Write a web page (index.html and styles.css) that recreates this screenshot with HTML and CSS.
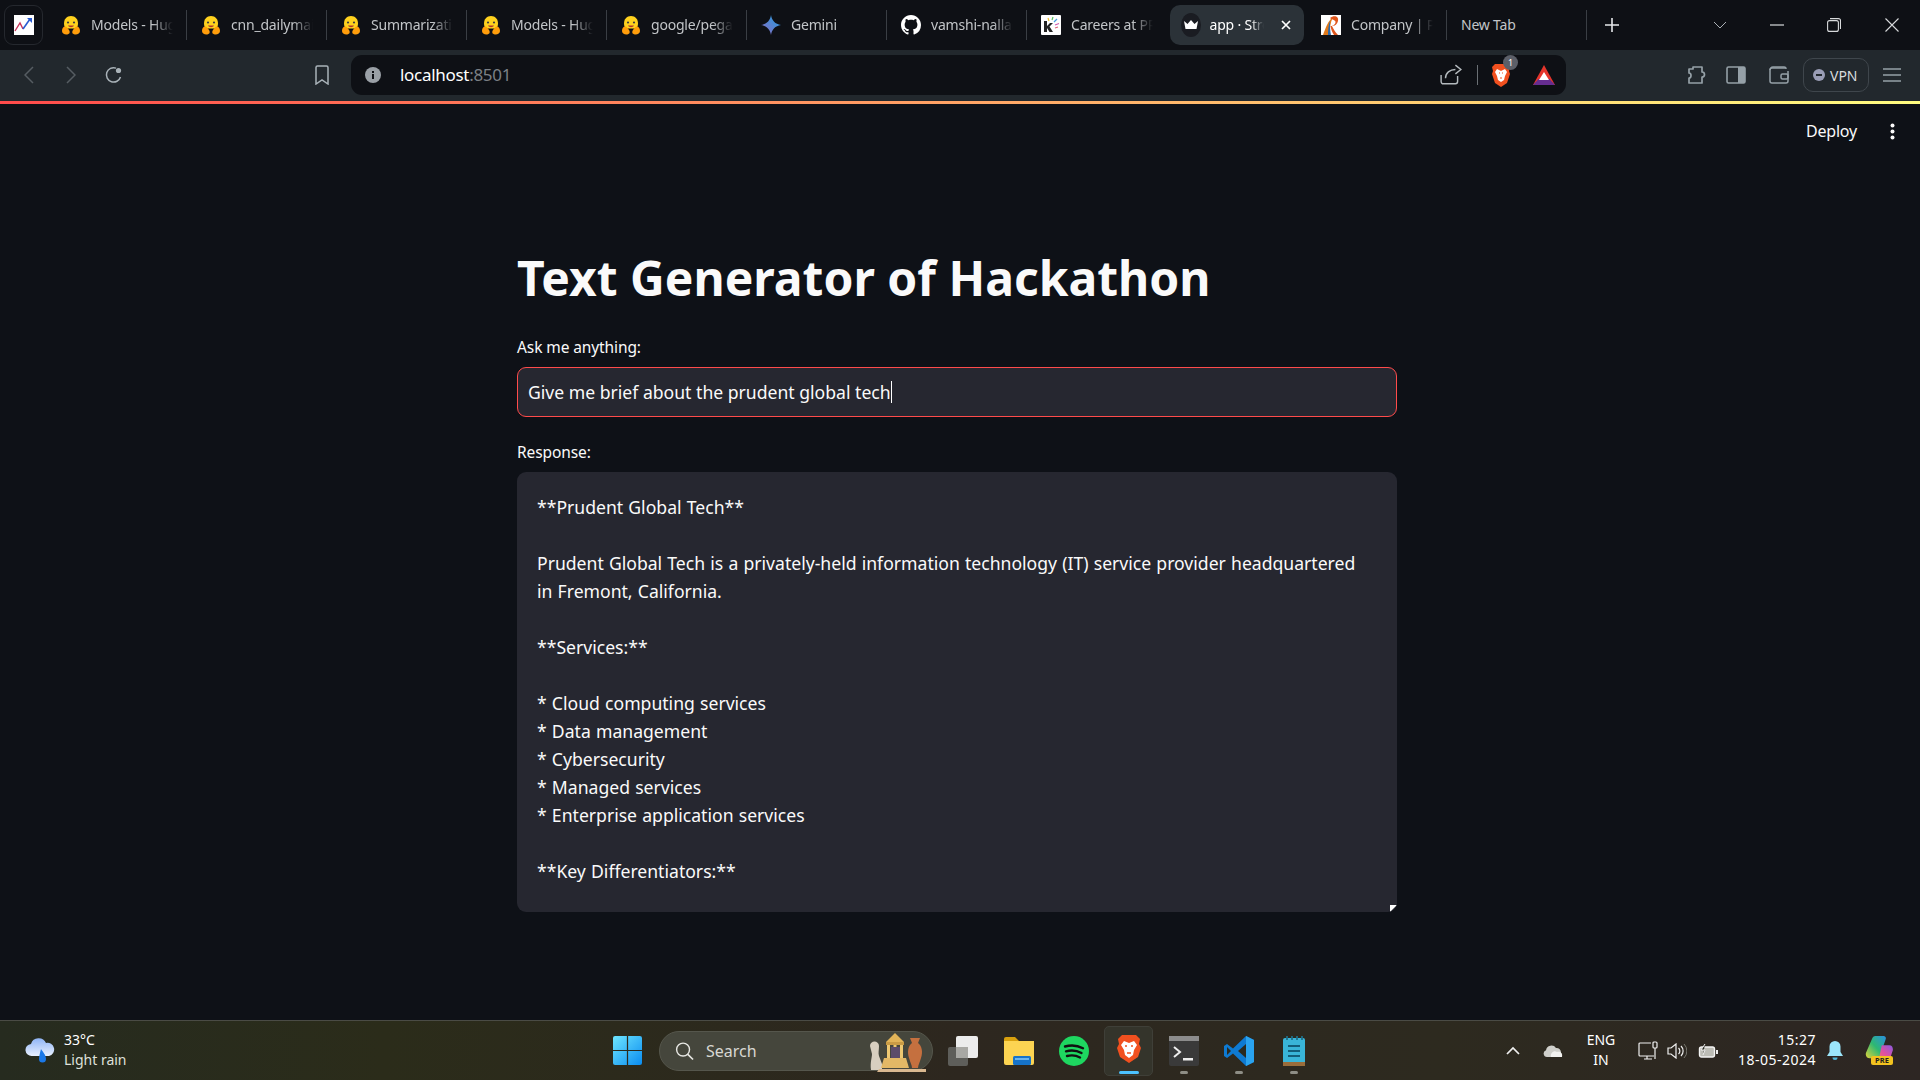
FILE: index.html
```html
<!DOCTYPE html>
<html lang="en">
<head>
<meta charset="utf-8">
<title>app · Streamlit</title>
<link rel="stylesheet" href="styles.css">
</head>
<body>
<svg class="sprite" xmlns="http://www.w3.org/2000/svg">
  <symbol id="hf" viewBox="0 0 20 20">
    <path d="M10 1C5.600 1 3 4.400 3 8.500c0 2 .6 3.700 1.600 5l10.800 0c1-1.300 1.600-3 1.600-5C17 4.400 14.400 1 10 1z" fill="#FFD21E"/>
    <circle cx="7" cy="7.500" r="1.100" fill="#3a3b45"/><circle cx="13" cy="7.500" r="1.100" fill="#3a3b45"/>
    <path d="M7 10.500c1 2.300 5 2.300 6 0z" fill="#b3322f"/>
    <path d="M1 16c0-3 1.500-4.500 3-4.500 1.500 0 2.500 1.500 4 3.500.8 1.100 1.500 3.500-1 4.200C4 20 1 18.500 1 16z" fill="#FF9D0B"/>
    <path d="M19 16c0-3-1.500-4.500-3-4.500-1.500 0-2.500 1.500-4 3.500-.8 1.100-1.500 3.500 1 4.200 3 .8 6-.7 6-3.200z" fill="#FF9D0B"/>
  </symbol>
</svg>

<header class="tabstrip">
  <div class="app-tile">
    <svg class="fav" viewBox="0 0 20 20"><rect width="20" height="20" fill="#fff"/><path d="M1 16l5-8 3 6" fill="none" stroke="#c9345a" stroke-width="1.400"/><path d="M9 14l7-10" fill="none" stroke="#2a5bd0" stroke-width="1.600"/><path d="M13 3h5v5z" fill="#2a5bd0"/></svg>
  </div>
  <div class="tab sep"><svg class="fav"><use href="#hf"/></svg><span class="tab-title">Models - Hugging Face</span></div>
  <div class="tab sep"><svg class="fav"><use href="#hf"/></svg><span class="tab-title">cnn_dailymail · Datasets</span></div>
  <div class="tab sep"><svg class="fav"><use href="#hf"/></svg><span class="tab-title">Summarization - Hugging</span></div>
  <div class="tab sep"><svg class="fav"><use href="#hf"/></svg><span class="tab-title">Models - Hugging Face</span></div>
  <div class="tab sep"><svg class="fav"><use href="#hf"/></svg><span class="tab-title">google/pegasus-xsum</span></div>
  <div class="tab sep">
    <svg class="fav" viewBox="0 0 20 20"><defs><linearGradient id="gem" x1="0" y1="1" x2="1" y2="0"><stop offset="0" stop-color="#9168c0"/><stop offset=".5" stop-color="#5684d1"/><stop offset="1" stop-color="#1ba1e3"/></linearGradient></defs><path d="M10 0c.8 5.500 4.200 9.200 10 10-5.800.8-9.200 4.500-10 10-.8-5.500-4.200-9.200-10-10 5.800-.8 9.200-4.500 10-10z" fill="url(#gem)"/></svg>
    <span class="tab-title">Gemini</span>
  </div>
  <div class="tab sep">
    <svg class="fav" viewBox="0 0 16 16"><path fill="#fff" d="M8 0C3.580 0 0 3.580 0 8c0 3.540 2.290 6.530 5.470 7.590.4.070.55-.17.55-.38 0-.19-.01-.82-.01-1.490-2.010.37-2.530-.49-2.690-.94-.09-.23-.48-.94-.82-1.130-.28-.15-.68-.52-.01-.53.63-.01 1.080.58 1.230.82.720 1.210 1.870.87 2.330.66.070-.52.280-.87.510-1.070-1.780-.2-3.640-.89-3.640-3.950 0-.87.310-1.590.820-2.150-.08-.2-.36-1.020.08-2.120 0 0 .67-.21 2.200.82.640-.18 1.320-.27 2-.27s1.360.09 2 .27c1.530-1.040 2.200-.82 2.200-.82.440 1.100.16 1.920.08 2.120.51.560.82 1.270.82 2.150 0 3.070-1.870 3.750-3.650 3.950.29.250.54.730.54 1.480 0 1.070-.01 1.930-.01 2.200 0 .21.150.46.550.38A8.010 8.010 0 0016 8c0-4.420-3.580-8-8-8z"/></svg>
    <span class="tab-title">vamshi-nallaguntla</span>
  </div>
  <div class="tab">
    <svg class="fav" viewBox="0 0 20 20"><rect width="20" height="20" rx="1" fill="#fff"/><path d="M3 6h3v5l3-3h3l-3.500 3.500L12 17H8.500L6 13v4H3z" fill="#222"/><path d="M8 6l-1-3" stroke="#f0c030" stroke-width="1.200"/><path d="M11 5l1-3" stroke="#5ac060" stroke-width="1.200"/><path d="M13 7l3-3" stroke="#4a9be0" stroke-width="1.200"/><path d="M14 10l4-1.500" stroke="#d05ab0" stroke-width="1.200"/><path d="M14 13l3-1" stroke="#e0607a" stroke-width="1.200"/></svg>
    <span class="tab-title">Careers at PRUDENT</span>
  </div>
  <div class="tab tab-active">
    <span class="crown-disc"><svg viewBox="0 0 14 10"><path d="M0 1l3.500 3L7 0l3.500 4L14 1l-1.500 8h-11z" fill="#fff"/></svg></span>
    <span class="tab-title">app · Streamlit</span>
    <svg class="tab-close" viewBox="0 0 10 10"><path d="M1 1l8 8M9 1l-8 8" stroke="#fff" stroke-width="1.700"/></svg>
  </div>
  <div class="tab sep">
    <svg class="fav" viewBox="0 0 20 20"><rect width="20" height="20" fill="#fff"/><path d="M2 20C5 12 7 6 12 2c-3 6-3 12-4 18z" fill="#e07a1c"/><path d="M9 3c4-3 9-2 8 3-.6 3-3 5-6 5 1.500 3 3 6 6 9h-4c-2-3-3-6-3.500-9 2.500 0 5-1.500 5-4 0-2-3-2-5.500-4z" fill="#e0561c"/><path d="M7 20c0-5 .5-10 2-14 0 5 0 10 1 14z" fill="#2a6cb0"/></svg>
    <span class="tab-title">Company | PRUDENT</span>
  </div>
  <div class="tab tab-plain sep"><span class="tab-title">New Tab</span></div>
  <svg class="strip-plus" viewBox="0 0 16 16"><path d="M8 1v14M1 8h14" stroke="#e6e8ea" stroke-width="1.600"/></svg>
  <svg class="strip-chev" viewBox="0 0 14 8"><path d="M1 1l6 6 6-6" fill="none" stroke="#aab0b5" stroke-width="1"/></svg>
  <svg class="win-btn win-min" viewBox="0 0 14 14"><path d="M0 7h14" stroke="#d8dadc" stroke-width="1.200"/></svg>
  <svg class="win-btn win-max" viewBox="0 0 14 14"><rect x=".6" y="2.600" width="10.800" height="10.800" rx="2" fill="none" stroke="#d8dadc" stroke-width="1.100"/><path d="M3 .6h8.500a2 2 0 012 2V11" fill="none" stroke="#d8dadc" stroke-width="1.100"/></svg>
  <svg class="win-btn win-close" viewBox="0 0 14 14"><path d="M.5.5l13 13M13.500.5l-13 13" stroke="#d8dadc" stroke-width="1.100"/></svg>
</header>

<nav class="toolbar">
  <svg class="tb-back" viewBox="0 0 10 18"><path d="M9 1L1 9l8 8" fill="none" stroke="#565d62" stroke-width="1.500"/></svg>
  <svg class="tb-forward" viewBox="0 0 10 18"><path d="M1 1l8 8-8 8" fill="none" stroke="#565d62" stroke-width="1.500"/></svg>
  <svg class="tb-reload" viewBox="0 0 18 18"><path d="M15.500 11A7.200 7.200 0 1111 2.100" fill="none" stroke="#a9b2b8" stroke-width="1.500"/><circle cx="13.500" cy="4.500" r="2.600" fill="#a9b2b8"/></svg>
  <svg class="tb-bookmark" viewBox="0 0 14 20"><path d="M1 2.500A1.500 1.500 0 012.500 1h9A1.500 1.500 0 0113 2.500V19l-6-4-6 4z" fill="none" stroke="#a9b2b8" stroke-width="1.500"/></svg>
  <div class="urlbar">
    <svg class="url-info" viewBox="0 0 16 16"><circle cx="8" cy="8" r="8" fill="#9aa0a6"/><rect x="7" y="7" width="2" height="5" fill="#0e1015"/><rect x="7" y="4" width="2" height="2" fill="#0e1015"/></svg>
    <span class="url-text">localhost<span class="url-port">:8501</span></span>
    <svg class="url-share" viewBox="0 0 20 20"><path d="M16 11v5a2 2 0 01-2 2H3a2 2 0 01-2-2V10" fill="none" stroke="#b4babe" stroke-width="1.300"/><path d="M5 13c0-5 4-8 9-8" fill="none" stroke="#b4babe" stroke-width="1.300"/><path d="M14 1l5 4-5 4" fill="none" stroke="#b4babe" stroke-width="1.300"/></svg>
    <span class="url-divider"></span>
    <span class="shield-wrap">
      <svg class="url-brave" viewBox="0 0 20 24"><path d="M4 1h12l3 3-1 4 1 3-3 9-6 4-6-4-3-9 1-3-1-4z" fill="#f1501f"/><path d="M6 6l4 2 4-2 2 3-2 4-1 4-3 2-3-2-1-4-2-4z" fill="#fff"/><path d="M8 10h1M11 10h1M9 15h2" stroke="#f1501f" stroke-width="1.200"/></svg>
      <span class="shield-badge">1</span>
    </span>
    <svg class="url-bat" viewBox="0 0 22 20"><path d="M11 0l11 20H0z" fill="#e5352c"/><path d="M0 20l5.500-6h11l5.500 6z" fill="#662d91"/><path d="M11 7l5 8H6z" fill="#fff"/></svg>
  </div>
  <svg class="tb-ext" viewBox="0 0 20 20"><path d="M7 2h9v5c2 0 2.500 1 2.500 2.500S18 12 16 12v6H3v-5c1.500 0 2-1 2-2.500S4.500 8 3 8V4h4z" fill="none" stroke="#95a0a7" stroke-width="1.700" stroke-linejoin="round"/></svg>
  <svg class="tb-side" viewBox="0 0 20 18"><rect x="1" y="1" width="18" height="16" rx="1.500" fill="none" stroke="#95a0a7" stroke-width="1.600"/><rect x="12" y="1" width="7" height="16" fill="#95a0a7"/></svg>
  <svg class="tb-wallet" viewBox="0 0 20 20"><path d="M16 3H3a2 2 0 00-2 2v11a2 2 0 002 2h14a2 2 0 002-2V6" fill="none" stroke="#95a0a7" stroke-width="1.500"/><path d="M1 5c0-1 1-3 3-3h11a2 2 0 012 2" fill="none" stroke="#95a0a7" stroke-width="1.500"/><rect x="12" y="9" width="7" height="5" rx="1.500" fill="none" stroke="#95a0a7" stroke-width="1.500"/></svg>
  <div class="vpn">
    <svg class="vpn-dot" viewBox="0 0 12 12"><circle cx="6" cy="6" r="6" fill="#9a9db5"/><rect x="3" y="5" width="6" height="2" fill="#22282d"/></svg>
    <span>VPN</span>
  </div>
  <svg class="tb-menu" viewBox="0 0 18 14"><path d="M0 1h18M0 7h18M0 13h18" stroke="#95a0a7" stroke-width="1.500"/></svg>
</nav>

<main class="app">
  <div class="decoration"></div>
  <div class="app-head">
    <span class="deploy">Deploy</span>
    <svg class="kebab" viewBox="0 0 5 17"><circle cx="2.500" cy="2.500" r="2" fill="#fafafa"/><circle cx="2.500" cy="8.500" r="2" fill="#fafafa"/><circle cx="2.500" cy="14.500" r="2" fill="#fafafa"/></svg>
  </div>
  <section class="block">
    <h1 class="title">Text Generator of Hackathon</h1>
    <label class="label label-ask">Ask me anything:</label>
    <div class="input"><span>Give me brief about the prudent global tech</span><span class="caret"></span></div>
    <label class="label label-resp">Response:</label>
    <div class="area">
      <p class="line">**Prudent Global Tech**</p>
      <p class="line"></p>
      <p class="line">Prudent Global Tech is a privately-held information technology (IT) service provider headquartered</p>
      <p class="line">in Fremont, California.</p>
      <p class="line"></p>
      <p class="line">**Services:**</p>
      <p class="line"></p>
      <p class="line">* Cloud computing services</p>
      <p class="line">* Data management</p>
      <p class="line">* Cybersecurity</p>
      <p class="line">* Managed services</p>
      <p class="line">* Enterprise application services</p>
      <p class="line"></p>
      <p class="line">**Key Differentiators:**</p>
      <svg class="grip" viewBox="0 0 7 7"><path d="M0 0h7L0 7z" fill="#fff"/></svg>
    </div>
  </section>
</main>

<footer class="taskbar">
  <div class="tb-left">
    <svg class="weather" viewBox="0 0 30 28"><defs><linearGradient id="cl" x1="0" y1="0" x2="0" y2="1"><stop offset="0" stop-color="#8fb4f5"/><stop offset="1" stop-color="#e8f0ff"/></linearGradient></defs><path d="M7 19a6 6 0 01-1-12 8 8 0 0115-1 6.500 6.500 0 013 13z" fill="url(#cl)"/><path d="M16 12l0 0c2 3 5 6 5 10a3.500 3.500 0 01-7 0c0-3 1-6 2-10z" fill="#1a78e8"/></svg>
    <div class="weather-text"><span class="w-temp">33°C</span><span class="w-desc">Light rain</span></div>
  </div>
  <div class="tb-center">
    <svg class="start" viewBox="0 0 28 28"><defs><linearGradient id="st" x1="0" y1="0" x2="1" y2="1"><stop offset="0" stop-color="#6ee6ff"/><stop offset="1" stop-color="#0a8cf0"/></linearGradient></defs><path d="M0 2a2 2 0 012-2h11.400v13.400H0zM14.600 0H26a2 2 0 012 2v11.400H14.600zM0 14.600h13.400V28H2a2 2 0 01-2-2zM14.600 14.600H28V26a2 2 0 01-2 2H14.600z" fill="url(#st)"/></svg>
    <div class="search">
      <svg class="search-ico" viewBox="0 0 20 20"><circle cx="8.500" cy="8.500" r="6.800" fill="none" stroke="#e8e8e4" stroke-width="1.500"/><path d="M13.500 13.500L19 19" stroke="#e8e8e4" stroke-width="1.700"/></svg>
      <span class="search-text">Search</span>
      <svg class="search-art" viewBox="0 0 57 40"><path d="M1 14c0-6 9-6 9 0 0 4-1 7 0 10l3 8v6H2c-1-8 1-12 1-16z" fill="#d8cfc0"/><path d="M17 10L26 1l9 9z" fill="#e2b458"/><rect x="17" y="10" width="18" height="3" fill="#c99b45"/><rect x="18" y="13" width="3" height="13" fill="#eec872"/><rect x="24.500" y="13" width="3" height="13" fill="#eec872"/><rect x="31" y="13" width="3" height="13" fill="#eec872"/><rect x="22" y="15" width="9" height="11" fill="#5c4c6a"/><path d="M15 26h22l3 10H12z" fill="#e3b866"/><path d="M41 6h10l-2 5c4 3 5 9 3 15-1 4-3 7-3 10h-6c0-3-2-6-3-10-2-6-1-12 3-15z" fill="#c5703f"/><path d="M10 37h47v3H8z" fill="#d9b890"/></svg>
    </div>
    <svg class="app-ico ico-task" viewBox="0 0 30 30"><rect x="0" y="11" width="20" height="19" rx="2" fill="#5e5e5a"/><rect x="8" y="0" width="22" height="22" rx="2" fill="#ececec"/><rect x="8" y="11" width="12" height="11" fill="#a8a8a4"/></svg>
    <svg class="app-ico ico-files" viewBox="0 0 30 28"><path d="M0 2a2 2 0 012-2h9l4 4H0z" fill="#d9a10e"/><path d="M0 4h30v22a2 2 0 01-2 2H2a2 2 0 01-2-2z" fill="#fcd452"/><rect x="9" y="19" width="18" height="9" rx="1.500" fill="#1673c9"/><rect x="11" y="21" width="14" height="2" fill="#6ab4ee"/></svg>
    <svg class="app-ico ico-spotify" viewBox="0 0 30 30"><circle cx="15" cy="15" r="15" fill="#1ed760"/><path d="M6 10.500c6-1.700 12.500-1.200 18 1.800M7 15.300c5.200-1.400 10.700-1 15.500 1.700M8 20c4.300-1.100 9-.8 13 1.500" fill="none" stroke="#111" stroke-width="2.400" stroke-linecap="round"/></svg>
    <div class="app-active">
      <svg class="ico-brave" viewBox="0 0 26 30"><path d="M6 1h14l4 4-1 5 2 4-3 9-9 6-9-6-3-9 2-4-1-5z" fill="#f1501f"/><path d="M8 7l5 2 5-2 3 4-3 5-1 5-4 3-4-3-1-5-3-5z" fill="#fff"/><path d="M9 12h2M15 12h2M11 19h4" stroke="#f1501f" stroke-width="1.500"/></svg>
      <span class="run-active"></span>
    </div>
    <div class="app-slot slot-term">
      <svg class="ico-term" viewBox="0 0 30 30"><rect width="30" height="30" rx="2" fill="#3a3a3a"/><rect width="30" height="5" fill="#8c8c8c"/><path d="M5 11l6 5-6 5" fill="none" stroke="#eee" stroke-width="2"/><rect x="14" y="22" width="10" height="2.500" fill="#eee"/></svg>
      <span class="run-dot"></span>
    </div>
    <div class="app-slot slot-code">
      <svg class="ico-code" viewBox="0 0 30 30"><path d="M22 0l8 4v22l-8 4-13-12.500L3 22l-3-2v-10l3-2 6 4.500z" fill="#0e7ad2"/><path d="M22 0l8 4v22l-8 4z" fill="#2aa3ef"/><path d="M22 8l-8 7 8 7z" fill="#2a2a20"/><path d="M3 11l4 4-4 4z" fill="#2a2a20"/></svg>
      <span class="run-dot"></span>
    </div>
    <div class="app-slot slot-notes">
      <svg class="ico-notes" viewBox="0 0 22 30"><rect y="2" width="22" height="28" rx="2" fill="#39b5d8"/><rect y="26" width="22" height="4" fill="#9a6d3b"/><path d="M4 0v4M9 0v4M14 0v4M19 0v4" stroke="#1e6f88" stroke-width="1.800"/><path d="M5 10h12M5 15h12M5 20h12" stroke="#125e7a" stroke-width="2"/></svg>
      <span class="run-dot"></span>
    </div>
  </div>
  <div class="tb-right">
    <svg class="tray-chev" viewBox="0 0 14 9"><path d="M1 8l6-6 6 6" fill="none" stroke="#f0f0f0" stroke-width="1.700"/></svg>
    <svg class="tray-cloud" viewBox="0 0 20 12"><path d="M4 12a3.500 3.500 0 01-1-6.800A5.500 5.500 0 0113 3a4.500 4.500 0 015 5 2.500 2.500 0 010 4z" fill="#cfcfcb"/><path d="M8 12c-1-4 3-7 6-5 3-1 6 1 5 5z" fill="#f2f2f0"/></svg>
    <div class="lang"><span>ENG</span><span>IN</span></div>
    <svg class="tray-net" viewBox="0 0 20 20"><path d="M13 2H2a1 1 0 00-1 1v11a1 1 0 001 1h14" fill="none" stroke="#f0f0f0" stroke-width="1.200"/><path d="M6 18h8M9 15v3" stroke="#f0f0f0" stroke-width="1.200"/><rect x="15" y="1" width="4" height="6" rx="1" fill="none" stroke="#f0f0f0" stroke-width="1.200"/><path d="M17 7v11" stroke="#f0f0f0" stroke-width="1.200"/></svg>
    <svg class="tray-vol" viewBox="0 0 20 16"><path d="M1 5h3l5-4v14l-5-4H1z" fill="none" stroke="#f0f0f0" stroke-width="1.200"/><path d="M11.500 5a4 4 0 010 6M14 3a7 7 0 010 10" fill="none" stroke="#f0f0f0" stroke-width="1.200"/><path d="M17 1a10 10 0 010 14" fill="none" stroke="#77776f" stroke-width="1"/></svg>
    <svg class="tray-bat" viewBox="0 0 20 14"><rect x="1.500" y="3" width="15" height="10" rx="2" fill="#bdbdb6" stroke="#f4f4f4" stroke-width="1.400"/><rect x="18" y="6" width="2" height="4" fill="#f0f0f0"/><path d="M7 0L3 6h4l-2 5" fill="#2a2a22" stroke="#f0f0f0" stroke-width="1"/></svg>
    <div class="clock"><span>15:27</span><span>18-05-2024</span></div>
    <svg class="tray-bell" viewBox="0 0 16 20"><path d="M8 0a5.500 5.500 0 00-5.500 5.500V11L0 15h16l-2.500-4V5.500A5.500 5.500 0 008 0z" fill="#9be6fb"/><path d="M5.500 16.500a2.500 2.500 0 005 0z" fill="#4fb6d8"/></svg>
    <div class="copilot">
      <svg class="copilot-ico" viewBox="0 0 30 28"><defs><linearGradient id="cpa" x1="0" y1="1" x2="1" y2="0"><stop offset="0" stop-color="#e0d43a"/><stop offset=".5" stop-color="#2eb872"/><stop offset="1" stop-color="#2a8fe0"/></linearGradient><linearGradient id="cpb" x1="0" y1="1" x2="1" y2="0"><stop offset="0" stop-color="#f08050"/><stop offset=".5" stop-color="#e050a0"/><stop offset="1" stop-color="#8a5ae0"/></linearGradient></defs><path d="M8 2a4 4 0 014-2h8c2 0 3 2 2 4l-7 20H5c-3 0-5-3-4-6z" fill="url(#cpa)"/><path d="M18 10h8c3 0 4 2 4 5l-3 9c-1 2-2 3-4 3H11c2 0 3-1 4-3z" fill="url(#cpb)"/></svg>
      <span class="pre">PRE</span>
    </div>
  </div>
</footer>
</body>
</html>
```

FILE: styles.css
```css
* { box-sizing: border-box; }
html, body { margin: 0; padding: 0; height: 100%; }
body {
  width: 1920px; height: 1080px; overflow: hidden;
  display: flex; flex-direction: column;
  background: #0e1117; color: #fafafa;
  font-family: "Noto Sans", sans-serif;
}
.sprite { display: none; }
svg { display: block; flex: none; }

/* tab strip */
.tabstrip { height: 50px; flex: none; background: #0e1015; display: flex; align-items: center; padding-left: 4px; }
.app-tile { width: 39px; height: 40px; border: 1px solid #25282e; border-radius: 9px; display: flex; align-items: center; justify-content: center; margin-right: 3.5px; }
.fav { width: 20px; height: 20px; }
.tab { width: 140px; height: 40px; display: flex; align-items: center; gap: 10px; padding: 0 14px 0 14.5px; position: relative; color: #c2c5c8; font-size: 14px; letter-spacing: -.2px; }
.tab.sep::after { content: ""; position: absolute; right: 0; top: 5px; bottom: 5px; width: 1px; background: #3a3e44; }
.tab-title { flex: 1; min-width: 0; line-height: 40px; height: 40px; white-space: nowrap; overflow: hidden; -webkit-mask-image: linear-gradient(90deg, #000 75%, transparent 100%); mask-image: linear-gradient(90deg, #000 75%, transparent 100%); }
.tab-plain { padding-left: 14.5px; }
.tab-plain .tab-title { -webkit-mask-image: none; mask-image: none; }
.tab-active { background: #2b3238; border-radius: 10px; width: 134px; margin: 0 3px; padding: 0 13px 0 11px; color: #fff; gap: 9px; }
.tab-active .tab-title { margin-right: 8px; }
.crown-disc { width: 20px; height: 24px; border-radius: 50%; background: #1a1c22; display: flex; align-items: center; justify-content: center; flex: none; }
.crown-disc svg { width: 14px; height: 10px; }
.tab-close { width: 10px; height: 10px; }
.strip-plus { width: 16px; height: 16px; margin-left: 17px; }
.strip-chev { width: 14px; height: 8px; margin-left: 93px; }
.win-btn { width: 14px; height: 14px; }
.win-min { margin-left: 43px; }
.win-max { margin-left: 43px; }
.win-close { margin-left: 44px; }

/* toolbar */
.toolbar { height: 51px; flex: none; background: #22282d; display: flex; align-items: center; padding-bottom: 1px; }
.tb-back { width: 10px; height: 18px; margin-left: 24px; }
.tb-forward { width: 10px; height: 18px; margin-left: 32px; }
.tb-reload { width: 18px; height: 18px; margin-left: 29px; }
.tb-bookmark { width: 14px; height: 20px; margin-left: 192px; }
.urlbar { width: 1215px; height: 40px; margin-left: 22px; background: #0e1015; border-radius: 11px; display: flex; align-items: center; }
.url-info { width: 16px; height: 16px; margin-left: 14px; }
.url-text { margin-left: 19px; font-size: 17px; line-height: 40px; height: 40px; color: #fff; letter-spacing: -.3px; width: 1049px; flex: none; }
.url-port { color: #7c8085; }
.url-share { width: 22px; height: 22px; margin-left: -9px; }
.url-divider { width: 1px; height: 20px; background: #6a6f74; margin-left: 15px; }
.shield-wrap { position: relative; width: 20px; height: 26px; margin-left: 13px; }
.url-brave { width: 20px; height: 26px; }
.shield-badge { position: absolute; left: 12px; top: -7px; width: 15px; height: 15px; border-radius: 50%; background: #5c5f68; color: #fff; font-size: 9px; line-height: 15px; text-align: center; }
.url-bat { width: 22px; height: 20px; margin-left: 22px; }
.tb-ext { width: 20px; height: 22px; margin-left: 120px; }
.tb-side { width: 20px; height: 18px; margin-left: 20px; }
.tb-wallet { width: 20px; height: 20px; margin-left: 23px; }
.vpn { width: 66px; height: 34px; margin-left: 14px; border: 1px solid #3f464c; border-radius: 10px; display: flex; align-items: center; gap: 5px; padding-left: 9px; font-size: 14px; color: #d9dcde; }
.vpn-dot { width: 12px; height: 12px; }
.tb-menu { width: 18px; height: 14px; margin-left: 14px; }

/* app */
.app { flex: 1; min-height: 0; background: #0e1117; display: flex; flex-direction: column; font-family: "Noto Sans", sans-serif; }
.decoration { height: 3px; flex: none; background: linear-gradient(90deg, #ff4b4b, #fffd80); }
.app-head { height: 54px; flex: none; display: flex; align-items: center; justify-content: flex-end; padding-right: 25px; }
.deploy { font-size: 16px; letter-spacing: -.2px; color: #fafafa; margin-right: 33px; }
.kebab { width: 5px; height: 17px; }
.block { width: 880px; margin-left: 517px; padding-top: 90px; }
.title { margin: 0; font-size: 48px; line-height: 60px; font-weight: 700; color: #fafafa; }
.label { display: block; font-size: 15.5px; line-height: 22px; letter-spacing: -.1px; color: #fafafa; }
.label-ask { margin-top: 28px; }
.label-resp { margin-top: 24px; }
.input { height: 50px; margin-top: 9px; padding-left: 10px; background: #262730; border: 1px solid #ff4b4b; border-radius: 9px; display: flex; align-items: center; font-size: 17.6px; color: #fafafa; }
.caret { width: 1px; height: 22px; background: #fff; margin-left: 0; }
.area { position: relative; height: 440px; margin-top: 9px; padding: 21px 20px 0; background: #262730; border-radius: 9px; font-size: 17.6px; word-spacing: .6px; overflow: hidden; }
.line { margin: 0; height: 28px; line-height: 28px; white-space: nowrap; color: #fafafa; }
.grip { position: absolute; right: 0; bottom: 0; width: 7px; height: 7px; }

/* taskbar */
.taskbar { height: 60px; flex: none; border-top: 1px solid #4a4b45; background: linear-gradient(90deg, #262b1f 0%, #2b2c1a 20%, #2d271f 50%, #2d2a1f 75%, #2d2623 100%); display: flex; align-items: center; color: #fff; font-family: "Noto Sans", sans-serif; }
.tb-left { width: 613px; flex: none; display: flex; align-items: center; padding-left: 25px; gap: 9px; }
.weather { width: 30px; height: 28px; }
.weather-text { display: flex; flex-direction: column; font-size: 14px; line-height: 20px; margin-top: -2px; }
.w-desc { color: #dfe0da; }
.tb-center { display: flex; align-items: center; }
.start { width: 29px; height: 29px; }
.search { width: 274px; height: 40px; margin-left: 17px; border-radius: 20px; border: 1px solid #55564c; background: #45463c; display: flex; align-items: center; padding-left: 15px; position: relative; }
.search-ico { width: 19px; height: 20px; }
.search-text { margin-left: 12px; font-size: 16px; color: #d8d8d2; }
.search-art { position: absolute; left: 209px; top: 0; width: 57px; height: 40px; }
.app-ico { width: 30px; height: 30px; }
.ico-task { margin-left: 15px; }
.ico-files { margin-left: 26px; height: 28px; }
.ico-spotify { margin-left: 25px; }
.app-active { width: 49px; height: 50px; margin-left: 15px; border-radius: 5px; border: 1px solid #3f3f38; background: #34342b; display: flex; justify-content: center; padding-top: 7px; position: relative; }
.ico-brave { width: 26px; height: 30px; }
.run-active { position: absolute; left: 14px; bottom: 1px; width: 20px; height: 3px; border-radius: 2px; background: #4cc2ff; }
.app-slot { width: 30px; height: 50px; display: flex; justify-content: center; padding-top: 10px; position: relative; }
.slot-term { margin-left: 16px; }
.slot-code { margin-left: 25px; }
.slot-notes { margin-left: 25px; }
.ico-term, .ico-code { width: 30px; height: 30px; }
.ico-notes { width: 22px; height: 30px; }
.run-dot { position: absolute; left: 11px; bottom: 2px; width: 8px; height: 3px; border-radius: 2px; background: #8e8e86; }
.tb-right { display: flex; align-items: center; margin-left: 197px; }
.tray-chev { width: 14px; height: 9px; }
.tray-cloud { width: 20px; height: 12px; margin-left: 23px; }
.lang { display: flex; flex-direction: column; align-items: center; font-size: 14px; line-height: 20px; width: 34px; margin-left: 21px; margin-top: -2px; }
.tray-net { width: 20px; height: 20px; margin-left: 20px; }
.tray-vol { width: 20px; height: 16px; margin-left: 9px; }
.tray-bat { width: 20px; height: 14px; margin-left: 11px; }
.clock { display: flex; flex-direction: column; align-items: flex-end; width: 88px; margin-left: 10px; font-size: 14px; line-height: 20px; letter-spacing: .5px; margin-top: -2px; }
.tray-bell { width: 16px; height: 20px; margin-left: 11px; }
.copilot { position: relative; width: 30px; height: 30px; margin-left: 22px; }
.copilot-ico { width: 28px; height: 26px; }
.pre { position: absolute; left: 6px; top: 20px; width: 22px; height: 9px; border-radius: 2px; background: #f2c21f; color: #1d1d1d; font-size: 7.500px; line-height: 9px; font-weight: 700; text-align: center; }
```
